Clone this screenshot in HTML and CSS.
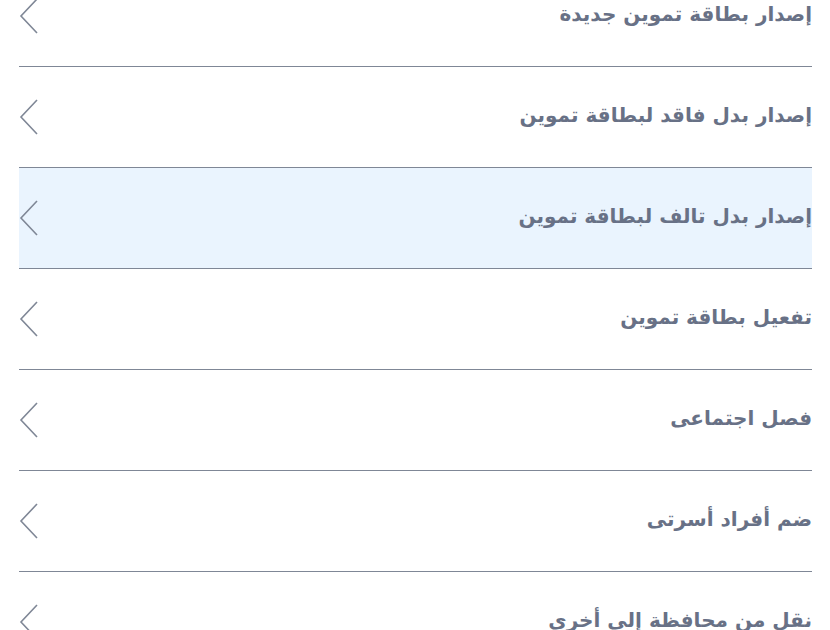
FILE: index.html
```html
<!DOCTYPE html>
<html lang="ar" dir="rtl">
<head>
<meta charset="utf-8">
<title>خدمات بطاقات التموين</title>
<link rel="stylesheet" href="styles.css">
</head>
<body>
<ul class="menu">
  <li class="item"><span class="label">إصدار بطاقة تموين جديدة</span><svg class="chev" viewBox="0 0 20 36" width="20" height="36"><polyline points="18,1 2,18 18,35"/></svg></li>
  <li class="item"><span class="label">إصدار بدل فاقد لبطاقة تموين</span><svg class="chev" viewBox="0 0 20 36" width="20" height="36"><polyline points="18,1 2,18 18,35"/></svg></li>
  <li class="item active"><span class="label">إصدار بدل تالف لبطاقة تموين</span><svg class="chev" viewBox="0 0 20 36" width="20" height="36"><polyline points="18,1 2,18 18,35"/></svg></li>
  <li class="item"><span class="label">تفعيل بطاقة تموين</span><svg class="chev" viewBox="0 0 20 36" width="20" height="36"><polyline points="18,1 2,18 18,35"/></svg></li>
  <li class="item"><span class="label">فصل اجتماعى</span><svg class="chev" viewBox="0 0 20 36" width="20" height="36"><polyline points="18,1 2,18 18,35"/></svg></li>
  <li class="item"><span class="label">ضم أفراد أسرتى</span><svg class="chev" viewBox="0 0 20 36" width="20" height="36"><polyline points="18,1 2,18 18,35"/></svg></li>
  <li class="item"><span class="label">نقل من محافظة إلى أخرى</span><svg class="chev" viewBox="0 0 20 36" width="20" height="36"><polyline points="18,1 2,18 18,35"/></svg></li>
</ul>
</body>
</html>
```
FILE: styles.css
```css
html, body {
  margin: 0;
  padding: 0;
  background: #ffffff;
  overflow: hidden;
}
body {
  font-family: "DejaVu Sans", sans-serif;
  color: #687186;
}
.menu {
  list-style: none;
  margin: -34px 18px 0 19px;
  padding: 0;
}
.item {
  height: 100px;
  border-bottom: 1px solid #7f8796;
  display: flex;
  align-items: center;
  justify-content: space-between;
}
.item.active {
  background: #eaf4fe;
}
.label {
  font-size: 20px;
  font-weight: bold;
  line-height: 1;
  margin-top: -5px;
}
.chev {
  display: block;
  flex: none;
}
.chev polyline {
  fill: none;
  stroke: #7f8796;
  stroke-width: 1.6;
}
```
